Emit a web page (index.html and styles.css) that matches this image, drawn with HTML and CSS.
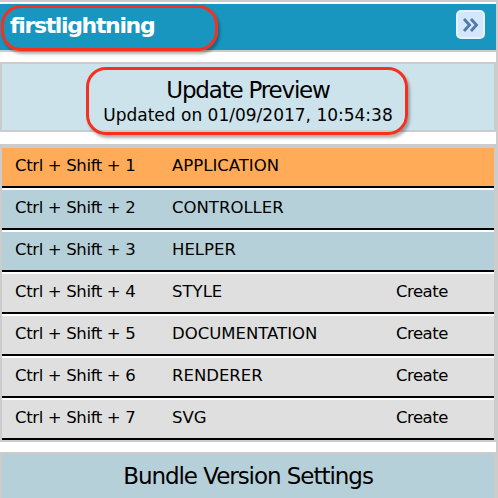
FILE: index.html
```html
<!DOCTYPE html>
<html lang="en">
<head>
  <meta charset="UTF-8">
  <title>firstlightning</title>
  <link rel="stylesheet" href="styles.css">
</head>
<body>
  <div class="panel">
    <div class="header">
      <span class="brand">firstlightning</span>
      <button class="collapseBtn" type="button">
        <svg width="20" height="16" viewBox="0 0 20 16">
          <path d="M3 2 L8.5 8 L3 14 M10 2 L15.5 8 L10 14" fill="none" stroke="#4f79aa" stroke-width="2.8"/>
        </svg>
      </button>
    </div>

    <div class="preview">
      <div class="previewTitle">Update Preview</div>
      <div class="previewDate">Updated on 01/09/2017, 10:54:38</div>
    </div>

    <ul class="shortcuts">
      <li class="row active"><span class="keys">Ctrl + Shift + 1</span><span class="name">APPLICATION</span></li>
      <li class="row exists"><span class="keys">Ctrl + Shift + 2</span><span class="name">CONTROLLER</span></li>
      <li class="row exists"><span class="keys">Ctrl + Shift + 3</span><span class="name">HELPER</span></li>
      <li class="row"><span class="keys">Ctrl + Shift + 4</span><span class="name">STYLE</span><span class="create">Create</span></li>
      <li class="row"><span class="keys">Ctrl + Shift + 5</span><span class="name">DOCUMENTATION</span><span class="create">Create</span></li>
      <li class="row"><span class="keys">Ctrl + Shift + 6</span><span class="name">RENDERER</span><span class="create">Create</span></li>
      <li class="row"><span class="keys">Ctrl + Shift + 7</span><span class="name">SVG</span><span class="create">Create</span></li>
    </ul>

    <div class="settings">Bundle Version Settings</div>
  </div>

  <!-- red annotations drawn over the screenshot -->
  <div class="mark markBrand"></div>
  <div class="mark markPreview"></div>
</body>
</html>
```

FILE: styles.css
```css
html, body {
  margin: 0;
  padding: 0;
  background-color: #fff;
}
body {
  position: relative;
  width: 498px;
  height: 498px;
  overflow: hidden;
  font-family: "DejaVu Sans", sans-serif;
  color: #000;
}
.panel {
  width: 496px;
  height: 498px;
  border-right: 2px solid #ccc;
  border-top: 2px solid #ccc;
  box-sizing: content-box;
  overflow: hidden;
}
.header {
  display: flex;
  justify-content: space-between;
  align-items: center;
  height: 46px;
  margin-top: 2px;
  padding: 0 11px 0 10px;
  background-color: #1896c0;
  border-bottom: 2px solid #ccc;
}
.brand {
  font-size: 22px;
  font-weight: bold;
  letter-spacing: -1.35px;
  color: #fff;
  margin-top: -3px;
}
.collapseBtn {
  display: flex;
  align-items: center;
  justify-content: center;
  width: 29px;
  height: 29px;
  margin-top: -5px;
  padding: 0;
  border: 2px solid #e6f1fb;
  border-radius: 5px;
  background-color: #d3e6fa;
}
.preview {
  margin-top: 10px;
  height: 66px;
  border: 2px solid #ccc;
  background-color: #cde3ec;
  text-align: center;
}
.previewTitle {
  font-size: 23px;
  letter-spacing: -1.2px;
  line-height: 28px;
  padding-top: 12px;
}
.previewDate {
  font-size: 17px;
  line-height: 22px;
}
.shortcuts {
  list-style: none;
  margin: 12px 0 0;
  padding: 0;
  border: 2px solid #ccc;
  border-width: 4px 2px 2px;
}
.row {
  display: flex;
  align-items: center;
  height: 35px;
  padding-left: 13px;
  padding-bottom: 3px;
  font-size: 16.5px;
  background-color: #dfdfdf;
  border-bottom: 2px solid #000;
  box-sizing: content-box;
  margin-bottom: 2px;
}
.row:last-child {
  margin-bottom: 0;
}
.row.active {
  background-color: #ffab57;
}
.row.exists {
  background-color: #b6d0da;
}
.keys {
  width: 157px;
  letter-spacing: -0.35px;
}
.name {
  width: 224px;
}
.create {
  letter-spacing: -0.5px;
}
.settings {
  margin-top: 10px;
  height: 44px;
  border: 2px solid #ccc;
  border-bottom: none;
  background-color: #b6d0da;
  font-size: 23px;
  letter-spacing: -1.04px;
  line-height: 44px;
  text-align: center;
}
.mark {
  position: absolute;
  box-sizing: border-box;
  border: 3px solid #f5301f;
  border-radius: 20px;
  box-shadow: 2px 3px 3px rgba(0, 0, 0, 0.3);
}
.markBrand {
  left: 1px;
  top: 5px;
  width: 217px;
  height: 46px;
}
.markPreview {
  left: 86px;
  top: 67px;
  width: 322px;
  height: 68px;
}
```
